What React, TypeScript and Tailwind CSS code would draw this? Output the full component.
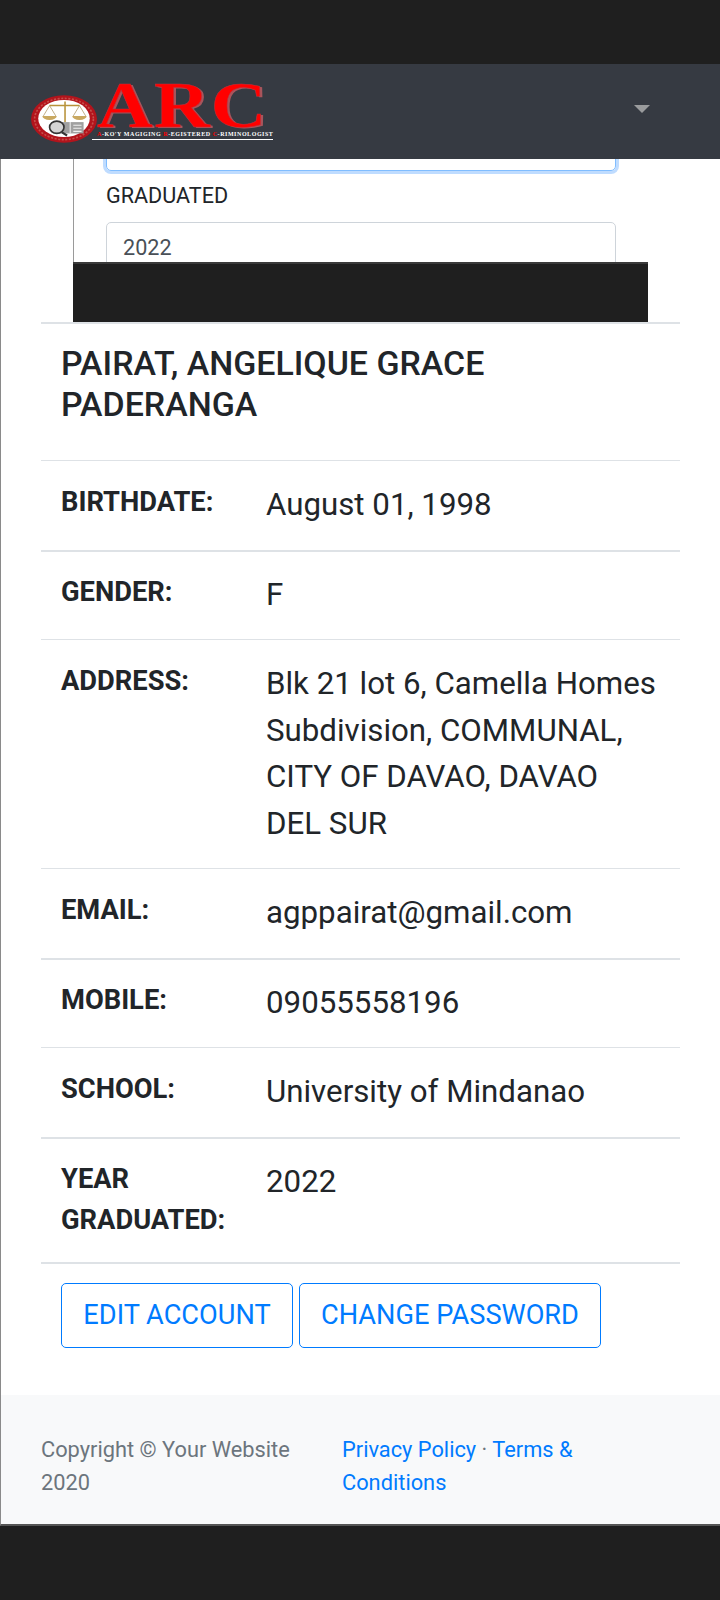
const rows: { label: string; value: string; thick?: boolean }[] = [
  { label: "BIRTHDATE:", value: "August 01, 1998" },
  { label: "GENDER:", value: "F", thick: true },
  { label: "ADDRESS:", value: "Blk 21 lot 6, Camella Homes Subdivision, COMMUNAL, CITY OF DAVAO, DAVAO DEL SUR" },
  { label: "EMAIL:", value: "agppairat@gmail.com" },
  { label: "MOBILE:", value: "09055558196", thick: true },
  { label: "SCHOOL:", value: "University of Mindanao" },
  { label: "YEAR GRADUATED:", value: "2022", thick: true },
];

/* seal drawn 1:1 with the reference, it's a squashed circle */
function Seal() {
  return (
    <svg viewBox="0 0 64 46" className="mt-[13px] h-[48px] w-[66px] shrink-0">
      <ellipse cx="32" cy="23" rx="32" ry="23" fill="#b3141c" />
      <ellipse cx="32" cy="23" rx="28.5" ry="20" fill="none" stroke="#e9b9a0" strokeWidth="1.6" strokeDasharray="2 1.5" opacity="0.35" />
      <ellipse cx="32" cy="22.5" rx="25" ry="18" fill="#fff" />
      <path d="M33 6v20M18 10h29" fill="none" stroke="#b8923a" strokeWidth="1.5" />
      <path d="M18 10l-6 10M18 10l6 10M47 10l-6 10M47 10l6 10" fill="none" stroke="#a8905a" strokeWidth="0.7" />
      <path d="M11 20h14a7 4 0 0 1-14 0zM40 20h14a7 4 0 0 1-14 0z" fill="#c9a860" />
      <rect x="25" y="26" width="26" height="11" fill="#a0a0a0" />
      <path d="M38 26v11M41 29h8M41 32h8M41 35h8" stroke="#eee" strokeWidth="1" />
      <ellipse cx="25" cy="31" rx="7" ry="6" fill="#d4d4d4" stroke="#333" strokeWidth="1.6" />
      <path d="M30 36l5 3" stroke="#333" strokeWidth="2" />
    </svg>
  );
}

function Logo() {
  return (
    <div className="flex">
      <Seal />
      <div className="-ml-[5px] w-[181px]">
        <div className="ml-[5px] h-[46px] origin-left scale-x-[1.17] whitespace-nowrap font-['Liberation_Serif',serif] text-[66px] leading-[46px] font-bold tracking-[1px] text-[#ff0000] [-webkit-text-stroke:0.5px_#c0303a] [text-shadow:2px_1px_0_#a8555c]">
          ARC
        </div>
        <div className="mt-[2px] whitespace-nowrap border-b border-white pb-[1px] pl-[5px] font-['Liberation_Serif',serif] text-[6px] leading-[8px] font-bold tracking-[0.55px] text-white">
          <span className="text-[#ff0000]">A</span>-KO'Y MAGIGING <span className="text-[#ff0000]">R</span>-EGISTERED <span className="text-[#ff0000]">C</span>-RIMINOLOGIST
        </div>
      </div>
    </div>
  );
}

export default function App() {
  return (
    <div className="flex h-[1600px] w-[720px] flex-col bg-[#1f1f1f] font-['Roboto',sans-serif] text-[#212529]">
      <div className="h-16" />
      <nav className="flex h-[95px] shrink-0 items-start justify-between bg-[#363a42] pl-[31px] pr-[70px] pt-[18px]">
        <Logo />
        <span className="mt-[23px] h-0 w-0 border-x-[8.5px] border-t-[8px] border-x-transparent border-t-[#9a9b9d]" />
      </nav>
      <main className="border-l border-[#8a8a8a] bg-white pb-[47px]">
        <div className="ml-[72px] h-[103px] w-[575px] overflow-hidden border-l border-[#9a9a9a]">
          <div className="mx-[32px] -mt-[38px] h-[50px] w-[510px] rounded-[5px] border border-[#80bdff] shadow-[0_0_0_3px_#bfdcff]" />
          <p className="ml-[32px] mt-[10px] text-[21.6px] leading-[30px]">GRADUATED</p>
          <div className="ml-[32px] mt-[11px] h-[50px] w-[510px] rounded-[5px] border border-[#ced4da] px-[16px] py-[10px] text-[21.6px] leading-[30px] text-[#495057]">2022</div>
        </div>
        <div className="ml-[72px] h-[60px] w-[575px] border-t-2 border-[#3a3a3a] bg-[#1f1f1f]" />
        <div className="mx-[40px] border-t-2 border-[#dee2e6]">
          <h3 className="px-[20px] pb-[35px] pt-[19px] text-[33.9px] leading-[41px] font-medium">PAIRAT, ANGELIQUE GRACE PADERANGA</h3>
          {rows.map((r) => (
            <div key={r.label} className={`flex border-t border-[#dee2e6] pl-[20px] ${r.thick ? "border-t-2 pb-[21px] pt-[20px]" : "pb-[21px] pt-[21px]"}`}>
              <div className="w-[205px] shrink-0 pr-[30px] text-[27.3px] leading-[41px] font-bold">{r.label}</div>
              <div className="w-[392px] text-[31.25px] leading-[46.5px]">{r.value}</div>
            </div>
          ))}
          <div className="flex gap-[6px] border-t-2 border-[#dee2e6] px-[20px] pt-[19px]">
            <button className="h-[65px] w-[232px] rounded-[5px] border border-[#007bff] text-[27.2px] text-[#007bff]">EDIT ACCOUNT</button>
            <button className="h-[65px] w-[302px] rounded-[5px] border border-[#007bff] text-[27.2px] text-[#007bff]">CHANGE PASSWORD</button>
          </div>
        </div>
      </main>
      <footer className="flex h-[131px] shrink-0 border-b-2 border-l border-b-[#555] border-l-[#8a8a8a] bg-[#f8f9fa] pl-[40px] pt-[38px] text-[21.8px] leading-[33px]">
        <div className="w-[301px] text-[#6c757d]">Copyright © Your Website 2020</div>
        <div className="w-[240px] text-[#007bff]">Privacy Policy <span className="text-[#6c757d]">·</span> Terms &amp; Conditions</div>
      </footer>
    </div>
  );
}
